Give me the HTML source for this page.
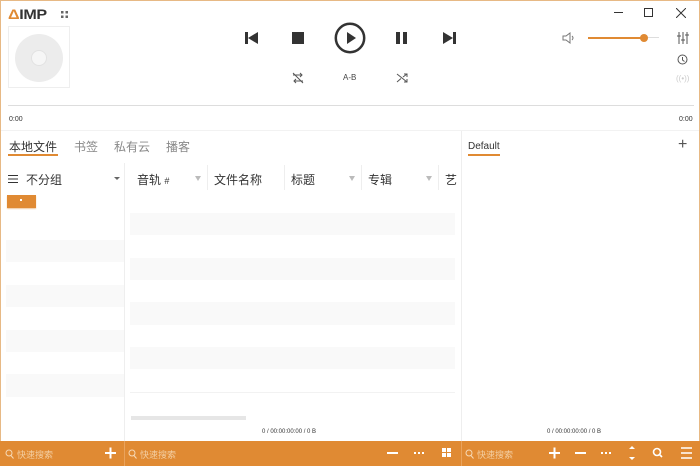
<!DOCTYPE html>
<html><head><meta charset="utf-8"><style>
*{margin:0;padding:0;box-sizing:border-box}
body{width:700px;height:466px;overflow:hidden;background:#fff;font-family:"Liberation Sans","Noto Sans CJK SC",sans-serif;color:#333;position:relative}
.a{position:absolute}
.frame{left:0;top:0;width:700px;height:466px;border:1px solid #e7b985;border-top-color:#e7b985}
.cn{font-size:12px;color:#333}
.stripe{background:#f9f9f9;height:22px}
.bar{top:441px;height:25px;background:#e08a33}
.sr{color:#f3cfa3;font-size:9px;top:448px}
</style></head><body>
<div class="a frame"></div>
<div class="a" style="left:8px;top:6px;font-size:14px;font-weight:bold;letter-spacing:-0.3px;color:#333;transform:scaleX(1.15);transform-origin:left"><span style="color:#e08a33">Δ</span>IMP</div>
<svg class="a" style="left:61px;top:11px" width="7" height="7"><rect x="0" y="0" width="2.5" height="2.5" fill="#666"/><rect x="4.5" y="0" width="2.5" height="2.5" fill="#666"/><rect x="0" y="4.5" width="2.5" height="2.5" fill="#666"/><rect x="4.5" y="4.5" width="2.5" height="2.5" fill="#666"/></svg>
<div class="a" style="left:8px;top:26px;width:62px;height:62px;border:1px solid #eee"></div>
<div class="a" style="left:15px;top:34px;width:48px;height:48px;border-radius:50%;background:#ececec"></div>
<div class="a" style="left:31px;top:50px;width:16px;height:16px;border-radius:50%;background:#f6f6f6;border:1px solid #e2e2e2"></div>
<svg class="a" style="left:245px;top:32px" width="14" height="12"><rect x="0" y="0" width="3" height="12" fill="#333"/><path d="M13 0L3 6L13 12Z" fill="#333"/></svg>
<div class="a" style="left:292px;top:32px;width:12px;height:12px;background:#333"></div>
<svg class="a" style="left:334px;top:22px" width="32" height="32"><circle cx="16" cy="16" r="14.2" fill="none" stroke="#333" stroke-width="2.5"/><path d="M13 10L22 16L13 22Z" fill="#333"/></svg>
<div class="a" style="left:396px;top:32px;width:4px;height:12px;background:#333"></div>
<div class="a" style="left:403px;top:32px;width:4px;height:12px;background:#333"></div>
<svg class="a" style="left:443px;top:32px" width="13" height="12"><path d="M0 0L10 6L0 12Z" fill="#333"/><rect x="10" y="0" width="3" height="12" fill="#333"/></svg>
<svg class="a" style="left:292px;top:72px" width="12" height="12" fill="none" stroke="#555" stroke-width="1"><path d="M1 3H10M8 1L10 3L8 5M11 9H2M4 7L2 9L4 11M1 1L11 11"/></svg>
<div class="a" style="left:343px;top:73px;font-size:8px;color:#444">A-B</div>
<svg class="a" style="left:396px;top:72px" width="12" height="12" fill="none" stroke="#555" stroke-width="1"><path d="M1 2L11 10M1 10L5 6.5M7 5L11 2M8 2H11V5M8 10H11V7"/></svg>
<div class="a" style="left:614px;top:12px;width:9px;height:1px;background:#333"></div>
<div class="a" style="left:644px;top:8px;width:9px;height:9px;border:1px solid #333"></div>
<svg class="a" style="left:676px;top:8px" width="10" height="10"><path d="M0 0L10 10M10 0L0 10" stroke="#333" stroke-width="1"/></svg>
<svg class="a" style="left:562px;top:32px" width="14" height="12" fill="none" stroke="#777" stroke-width="1"><path d="M1 4H4L8 1V11L4 8H1Z"/><path d="M10 4Q12 6 10 8"/></svg>
<div class="a" style="left:588px;top:37px;width:56px;height:2px;background:#e08a33"></div>
<div class="a" style="left:644px;top:37px;width:15px;height:1px;background:#ddd"></div>
<div class="a" style="left:640px;top:34px;width:8px;height:8px;border-radius:50%;background:#e08a33"></div>
<svg class="a" style="left:677px;top:32px" width="12" height="12" stroke="#555" stroke-width="1"><path d="M2 0V12M6 0V12M10 0V12M0 4H4M4 8H8M8 3H12"/></svg>
<svg class="a" style="left:677px;top:54px" width="11" height="11" fill="none" stroke="#555" stroke-width="1"><circle cx="5.5" cy="5.5" r="4.5"/><path d="M5.5 3V6L7.5 7.5"/></svg>
<div class="a" style="left:676px;top:74px;font-size:8px;color:#ccc">((•))</div>
<div class="a" style="left:8px;top:105px;width:686px;height:1px;background:#ddd"></div>
<div class="a" style="left:9px;top:116px;font-size:7px;color:#333">0:00</div>
<div class="a" style="left:679px;top:116px;font-size:7px;color:#333">0:00</div>
<div class="a" style="left:1px;top:130px;width:698px;height:1px;background:#f2f2f2"></div>
<div class="a" style="left:124px;top:163px;width:1px;height:278px;background:#eee"></div>
<div class="a" style="left:461px;top:131px;width:1px;height:310px;background:#eee"></div>
<div class="a cn" style="left:9px;top:138px">本地文件</div>
<div class="a" style="left:8px;top:154px;width:50px;height:2px;background:#e08a33"></div>
<div class="a cn" style="left:74px;top:138px;color:#888">书签</div>
<div class="a cn" style="left:114px;top:138px;color:#888">私有云</div>
<div class="a cn" style="left:166px;top:138px;color:#888">播客</div>
<div class="a" style="left:468px;top:141px;font-size:10px;color:#333">Default</div>
<div class="a" style="left:468px;top:154px;width:32px;height:2px;background:#e08a33"></div>
<div class="a" style="left:678px;top:136px;font-size:16px;color:#555;font-weight:300">+</div>
<svg class="a" style="left:8px;top:175px" width="10" height="8" stroke="#333"><path d="M0 .5H10M0 4H10M0 7.5H10"/></svg>
<div class="a cn" style="left:26px;top:171px">不分组</div>
<div class="a" style="left:114px;top:177px;border-left:3px solid transparent;border-right:3px solid transparent;border-top:3px solid #666"></div>
<div class="a" style="left:7px;top:195px;width:29px;height:13px;background:#e08a33;box-shadow:0 1px 1px #f0c9a0"></div>
<div class="a" style="left:20px;top:199px;width:2px;height:2px;background:#fff"></div>
<div class="a stripe" style="left:6px;top:240px;width:118px"></div>
<div class="a stripe" style="left:6px;top:285px;width:118px"></div>
<div class="a stripe" style="left:6px;top:330px;width:118px"></div>
<div class="a stripe" style="left:6px;top:374px;width:118px;height:23px"></div>
<div class="a cn" style="left:137px;top:171px">音轨 <span style="font-size:9px">#</span></div>
<div class="a cn" style="left:214px;top:171px">文件名称</div>
<div class="a cn" style="left:291px;top:171px">标题</div>
<div class="a cn" style="left:368px;top:171px">专辑</div>
<div class="a cn" style="left:445px;top:171px">艺</div>
<div class="a" style="left:195px;top:176px;border-left:3px solid transparent;border-right:3px solid transparent;border-top:5px solid #bbb"></div>
<div class="a" style="left:349px;top:176px;border-left:3px solid transparent;border-right:3px solid transparent;border-top:5px solid #bbb"></div>
<div class="a" style="left:426px;top:176px;border-left:3px solid transparent;border-right:3px solid transparent;border-top:5px solid #bbb"></div>
<div class="a" style="left:207px;top:165px;width:1px;height:25px;background:#eee"></div>
<div class="a" style="left:284px;top:165px;width:1px;height:25px;background:#eee"></div>
<div class="a" style="left:361px;top:165px;width:1px;height:25px;background:#eee"></div>
<div class="a" style="left:438px;top:165px;width:1px;height:25px;background:#eee"></div>
<div class="a stripe" style="left:130px;top:213px;width:325px"></div>
<div class="a stripe" style="left:130px;top:258px;width:325px"></div>
<div class="a stripe" style="left:130px;top:302px;width:325px;height:23px"></div>
<div class="a stripe" style="left:130px;top:347px;width:325px"></div>
<div class="a" style="left:130px;top:392px;width:325px;height:1px;background:#f2f2f2"></div>
<div class="a" style="left:131px;top:416px;width:115px;height:4px;background:#e6e6e6"></div>
<div class="a" style="left:262px;top:429px;font-size:6px;color:#333">0 / 00:00:00:00 / 0 B</div>
<div class="a" style="left:547px;top:429px;font-size:6px;color:#333">0 / 00:00:00:00 / 0 B</div>
<div class="a bar" style="left:0;width:700px"></div>
<div class="a" style="left:124px;top:441px;width:1px;height:25px;background:#eaa35c"></div>
<div class="a" style="left:461px;top:441px;width:1px;height:25px;background:#eaa35c"></div>
<svg class="a" style="left:5px;top:449px" width="9" height="10" fill="none" stroke="#f6d9b6"><circle cx="4" cy="4" r="3"/><path d="M6 6.5L8.5 9.5"/></svg>
<div class="a sr" style="left:17px">快速搜索</div>
<svg class="a" style="left:128px;top:449px" width="9" height="10" fill="none" stroke="#f6d9b6"><circle cx="4" cy="4" r="3"/><path d="M6 6.5L8.5 9.5"/></svg>
<div class="a sr" style="left:140px">快速搜索</div>
<svg class="a" style="left:465px;top:449px" width="9" height="10" fill="none" stroke="#f6d9b6"><circle cx="4" cy="4" r="3"/><path d="M6 6.5L8.5 9.5"/></svg>
<div class="a sr" style="left:477px">快速搜索</div>
<svg class="a" style="left:0;top:441px" width="700" height="25" fill="#fff" stroke="#fff">
<path d="M105 12H116M110.5 6.5V17.5" stroke-width="2"/>
<path d="M387 12H398" stroke-width="2"/>
<g stroke="none"><rect x="414" y="11" width="2" height="2"/><rect x="418" y="11" width="2" height="2"/><rect x="422" y="11" width="2" height="2"/>
<rect x="442" y="7" width="4" height="4"/><rect x="447" y="7" width="4" height="4"/><rect x="442" y="12" width="4" height="4"/><rect x="447" y="12" width="4" height="4"/>
<rect x="601" y="11" width="2" height="2"/><rect x="605" y="11" width="2" height="2"/><rect x="609" y="11" width="2" height="2"/>
<path d="M632 5L635 8H629Z M632 19L635 16H629Z"/></g>
<path d="M549 12H560M554.5 6.5V17.5" stroke-width="2"/>
<path d="M575 12H586" stroke-width="2"/>
<circle cx="657" cy="11" r="3.5" fill="none" stroke-width="1.6"/><path d="M659.5 13.5L662 16" stroke-width="1.6"/>
<path d="M681 7H692M681 12H692M681 17H692" stroke-width="1.5"/>
</svg>
</body></html>
